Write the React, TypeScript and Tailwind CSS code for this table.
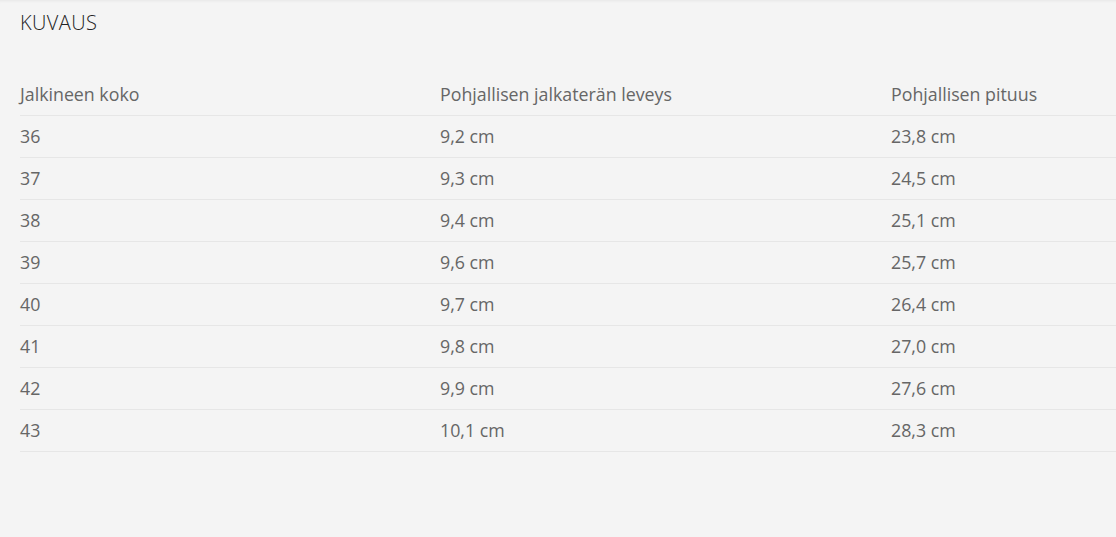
const rows = [
  ['36', '9,2 cm', '23,8 cm'],
  ['37', '9,3 cm', '24,5 cm'],
  ['38', '9,4 cm', '25,1 cm'],
  ['39', '9,6 cm', '25,7 cm'],
  ['40', '9,7 cm', '26,4 cm'],
  ['41', '9,8 cm', '27,0 cm'],
  ['42', '9,9 cm', '27,6 cm'],
  ['43', '10,1 cm', '28,3 cm'],
];

export default function App() {
  return (
    <div className="h-[537px] w-[1116px] overflow-hidden bg-[#f4f4f4] font-['Open_Sans',sans-serif] shadow-[inset_0_3px_3px_-2px_rgba(0,0,0,0.06)]">
      <div className="pl-5 pt-[9px]">
        <h2 className="text-[20px] leading-[28px] font-light text-[#222] tracking-[0.4px]">KUVAUS</h2>
        <table className="mt-[37px] w-[1120px] border-collapse text-left text-[17.8px] text-[#666]">
          <thead>
            <tr className="border-b border-[#e6e6e6]">
              <th className="w-[420px] py-[9px] font-normal leading-[23px]">Jalkineen koko</th>
              <th className="w-[451px] py-[9px] font-normal leading-[23px]">Pohjallisen jalkaterän leveys</th>
              <th className="py-[9px] font-normal leading-[23px]">Pohjallisen pituus</th>
            </tr>
          </thead>
          <tbody>
            {rows.map(r => (
              <tr key={r[0]} className="border-b border-[#e6e6e6]">
                <td className="py-[9px] leading-[23px]">{r[0]}</td>
                <td className="py-[9px] leading-[23px]">{r[1]}</td>
                <td className="py-[9px] leading-[23px]">{r[2]}</td>
              </tr>
            ))}
          </tbody>
        </table>
      </div>
    </div>
  );
}
